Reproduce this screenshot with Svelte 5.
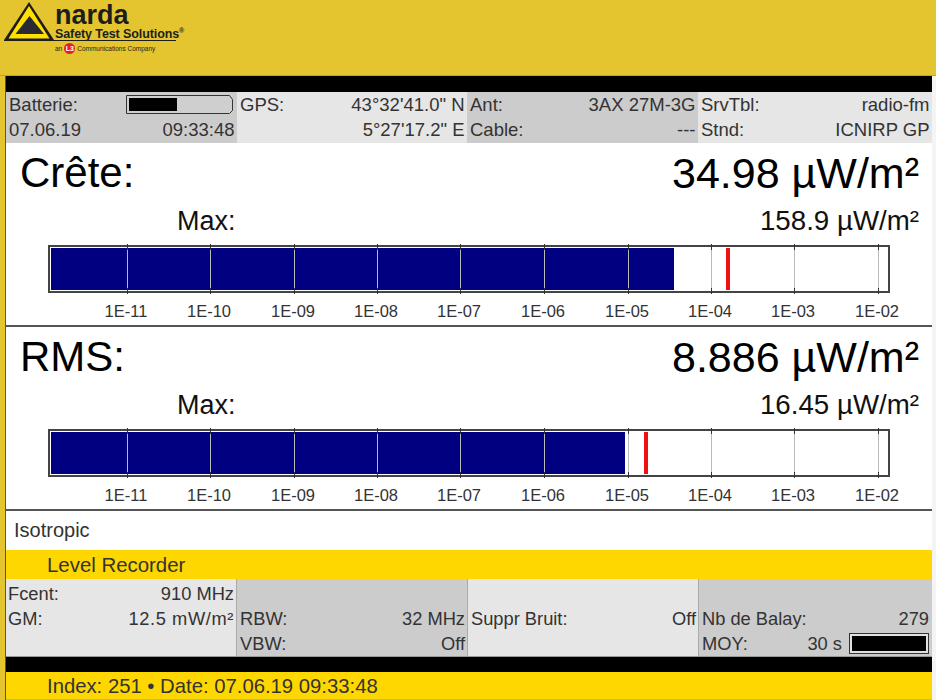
<script>
  const info = [
    { shade: 'dark', width: 231, rows: [['Batterie:', null, true], ['07.06.19', '09:33:48']] },
    { shade: 'light', width: 230, rows: [['GPS:', '43°32\'41.0" N'], ['', '5°27\'17.2" E']] },
    { shade: 'dark', width: 231, rows: [['Ant:', '3AX 27M-3G'], ['Cable:', '---']] },
    { shade: 'light', width: 234, rows: [['SrvTbl:', 'radio-fm'], ['Stnd:', 'ICNIRP GP']] }
  ];

  const ticks = [
    ['1E-11', 79], ['1E-10', 162], ['1E-09', 246], ['1E-08', 329], ['1E-07', 412],
    ['1E-06', 496], ['1E-05', 580], ['1E-04', 663], ['1E-03', 746], ['1E-02', 830]
  ];

  const meters = [
    { name: 'Crête:', value: '34.98 µW/m²', max: '158.9 µW/m²', fill: 623, peak: 676 },
    { name: 'RMS:', value: '8.886 µW/m²', max: '16.45 µW/m²', fill: 574, peak: 594 }
  ];
</script>

<div class="page">
  <header class="brand">
    <svg class="logo" width="178" height="44" viewBox="0 0 178 44">
      <path d="M29 2 L54 40 L4 40 Z" fill="#1d1d1b" />
      <path d="M29 6 L49.500 38.500 L8.500 38.500 Z" fill="#ffe000" />
      <path d="M29.500 16 L44 34 L15.500 34 Z" fill="#2a2a35" />
      <path d="M4 40.500 H176" stroke="#1d1d1b" stroke-width="1.200" />
    </svg>
    <div class="brand-text">
      <div class="brand-name">narda</div>
      <div class="brand-sub">Safety Test Solutions<sup>®</sup></div>
      <div class="brand-l3">an <span class="l3">L3</span> Communications Company</div>
    </div>
  </header>

  <main class="panel">
    <div class="black-bar"></div>

    <section class="info">
      {#each info as col}
        <div class="info-col {col.shade}" style="width: {col.width}px">
          {#each col.rows as row}
            <div class="info-row">
              <span>{row[0]}</span>
              {#if row[2]}
                <svg class="battery" width="107" height="20" viewBox="0 0 107 20">
                  <path d="M0.500 0.500 H103.500 L106.500 4.500 V15.500 L103.500 18.500 H0.500 Z" fill="#cfcfcf" stroke="#333" />
                  <rect x="3" y="3" width="48" height="13" fill="#000" />
                </svg>
              {:else}
                <span>{row[1]}</span>
              {/if}
            </div>
          {/each}
        </div>
      {/each}
    </section>

    {#each meters as m}
      <section class="meter">
        <div class="meter-head">
          <span class="meter-name">{m.name}</span>
          <span>{m.value}</span>
        </div>
        <div class="meter-max">
          <span>Max:</span>
          <span class="max-value">{m.max}</span>
        </div>
        <div class="gauge">
          <div class="gauge-fill" style="width: {m.fill}px"></div>
          <div class="gauge-peak" style="left: {m.peak}px"></div>
          {#each ticks as t}
            <div class="tick" style="left: {t[1] - 2}px"></div>
          {/each}
        </div>
        <div class="scale">
          {#each ticks as t}
            <span class="scale-label" style="left: {t[1] - 1}px">{t[0]}</span>
          {/each}
        </div>
      </section>
    {/each}

    <div class="mode">Isotropic</div>
    <div class="title-bar">Level Recorder</div>

    <section class="settings">
      <div class="set-col light first">
        <div class="info-row"><span>Fcent:</span><span>910 MHz</span></div>
        <div class="info-row"><span>GM:</span><span class="wide">12.5 mW/m²</span></div>
      </div>
      <div class="set-col dark mid">
        <div class="info-row"></div>
        <div class="info-row"><span>RBW:</span><span>32 MHz</span></div>
        <div class="info-row"><span>VBW:</span><span>Off</span></div>
      </div>
      <div class="set-col light mid">
        <div class="info-row"></div>
        <div class="info-row"><span>Suppr Bruit:</span><span>Off</span></div>
      </div>
      <div class="set-col dark last">
        <div class="info-row"></div>
        <div class="info-row"><span>Nb de Balay:</span><span>279</span></div>
        <div class="info-row">
          <span>MOY:</span>
          <span class="moy">30 s <span class="moy-box"><span></span></span></span>
        </div>
      </div>
    </section>

    <div class="black-bar thin"></div>
    <div class="title-bar status">Index: 251 • Date: 07.06.19 09:33:48</div>
  </main>
</div>

<style>
  :global(body) {
    margin: 0;
    background: #fff;
  }

  .page {
    width: 936px;
    height: 700px;
    overflow: hidden;
    font-family: "Liberation Sans", Arial, sans-serif;
    color: #222;
    background: linear-gradient(to right, #e4c52f 5px, #f4f4f4 5px);
  }

  .brand {
    height: 76px;
    box-sizing: border-box;
    background: #e4c52f;
    position: relative;
    border-bottom: 1px solid #b5a34a;
  }

  .logo {
    position: absolute;
    left: 0;
    top: 0;
  }

  .brand-text {
    padding-left: 55px;
    color: #1d1d1b;
    position: relative;
  }

  .brand-name {
    font-size: 27px;
    font-weight: 700;
    line-height: 24px;
    height: 24px;
    padding-top: 3px;
  }

  .brand-sub {
    font-size: 12.5px;
    font-weight: 700;
    line-height: 13px;
    height: 13px;
    padding-top: 1px;
    letter-spacing: -0.1px;
    white-space: nowrap;
  }

  .brand-sub sup {
    font-size: 7px;
    line-height: 0;
    vertical-align: 5px;
  }

  .brand-l3 {
    font-size: 6.500px;
    margin-top: 2px;
    display: flex;
    align-items: center;
    gap: 2px;
    white-space: nowrap;
  }

  .l3 {
    width: 11px;
    height: 11px;
    border-radius: 50%;
    background: #e3231b;
    color: #fff;
    font-size: 7px;
    font-weight: 700;
    text-align: center;
    line-height: 11px;
  }

  .panel {
    width: 927px;
    height: 624px;
    margin-left: 5px;
    background: #fff;
    display: flex;
    flex-direction: column;
    border-left: 1px solid #555;
    box-sizing: border-box;
  }

  .black-bar {
    height: 16px;
    background: #000;
    flex: none;
  }

  .black-bar.thin {
    height: 15px;
  }

  .info {
    height: 51px;
    display: flex;
    flex: none;
  }

  .info-col {
    box-sizing: border-box;
    padding: 0 2.500px 0 3px;
    flex: none;
  }

  .dark {
    background: #cccccc;
  }

  .light {
    background: #e6e6e6;
  }

  .info-row {
    height: 25px;
    display: flex;
    justify-content: space-between;
    align-items: center;
    font-size: 18.500px;
    color: #333;
    white-space: nowrap;
  }

  .battery {
    margin-right: 2px;
    margin-top: 1px;
  }

  .meter {
    height: 184px;
    flex: none;
    box-sizing: border-box;
    border-bottom: 2px solid #555;
    padding: 0 13px 0 14px;
  }

  .meter-head {
    display: flex;
    justify-content: space-between;
    font-size: 43px;
    line-height: 46px;
    height: 46px;
    padding-top: 7px;
    color: #000;
  }

  .meter-name {
    font-size: 42px;
  }

  .meter-max {
    display: flex;
    justify-content: space-between;
    font-size: 27px;
    line-height: 28px;
    height: 28px;
    margin-top: 11px;
    padding-left: 157px;
    color: #111;
  }

  .max-value {
    font-size: 27.700px;
  }

  .gauge {
    position: relative;
    width: 842px;
    height: 48px;
    box-sizing: border-box;
    border: 2px solid #444;
    margin: 10px 0 0 28px;
  }

  .gauge-fill {
    position: absolute;
    left: 1px;
    top: 1px;
    bottom: 1px;
    background: #000080;
  }

  .gauge-peak {
    position: absolute;
    top: 1px;
    bottom: 1px;
    width: 4px;
    background: #f01010;
  }

  .tick {
    position: absolute;
    top: -3px;
    bottom: -3px;
    width: 1px;
    background: #333;
  }

  .tick::after {
    content: "";
    position: absolute;
    left: 0;
    top: 6px;
    bottom: 6px;
    width: 1px;
    background: #bbb;
  }

  .scale {
    position: relative;
    height: 22px;
    margin-left: 28px;
  }

  .scale-label {
    position: absolute;
    top: 8px;
    transform: translateX(-50%);
    font-size: 16.500px;
    line-height: 20px;
    color: #333;
    white-space: nowrap;
  }

  .mode {
    height: 39px;
    flex: none;
    line-height: 38px;
    font-size: 20px;
    padding-left: 8px;
    color: #333;
  }

  .title-bar {
    height: 29px;
    flex: none;
    background: #ffd700;
    color: #333;
    font-size: 20.400px;
    line-height: 30px;
    padding-left: 41px;
  }

  .title-bar.status {
    height: 27px;
    line-height: 28px;
    font-size: 20.300px;
    border-bottom: 1px solid #c9b94c;
  }

  .settings {
    height: 78px;
    flex: none;
    display: flex;
    border-bottom: 1px solid #999;
    box-sizing: border-box;
  }

  .set-col {
    box-sizing: border-box;
    padding: 2px 2px 0 3px;
    flex: none;
  }

  .set-col .info-row {
    font-size: 18.300px;
  }

  .wide {
    letter-spacing: 0.6px;
  }

  .first {
    width: 230px;
    padding-left: 2px;
  }

  .mid {
    width: 231px;
    border-left: 1px solid #aaa;
  }

  .last {
    width: 234px;
    border-left: 1px solid #aaa;
    padding-right: 3px;
  }

  .moy {
    display: flex;
    align-items: center;
    gap: 7px;
  }

  .moy-box {
    width: 80px;
    height: 21px;
    box-sizing: border-box;
    border: 1px solid #333;
    background: #e0e0e0;
    padding: 2px;
    display: flex;
  }

  .moy-box span {
    flex: 1;
    background: #000;
  }
</style>
